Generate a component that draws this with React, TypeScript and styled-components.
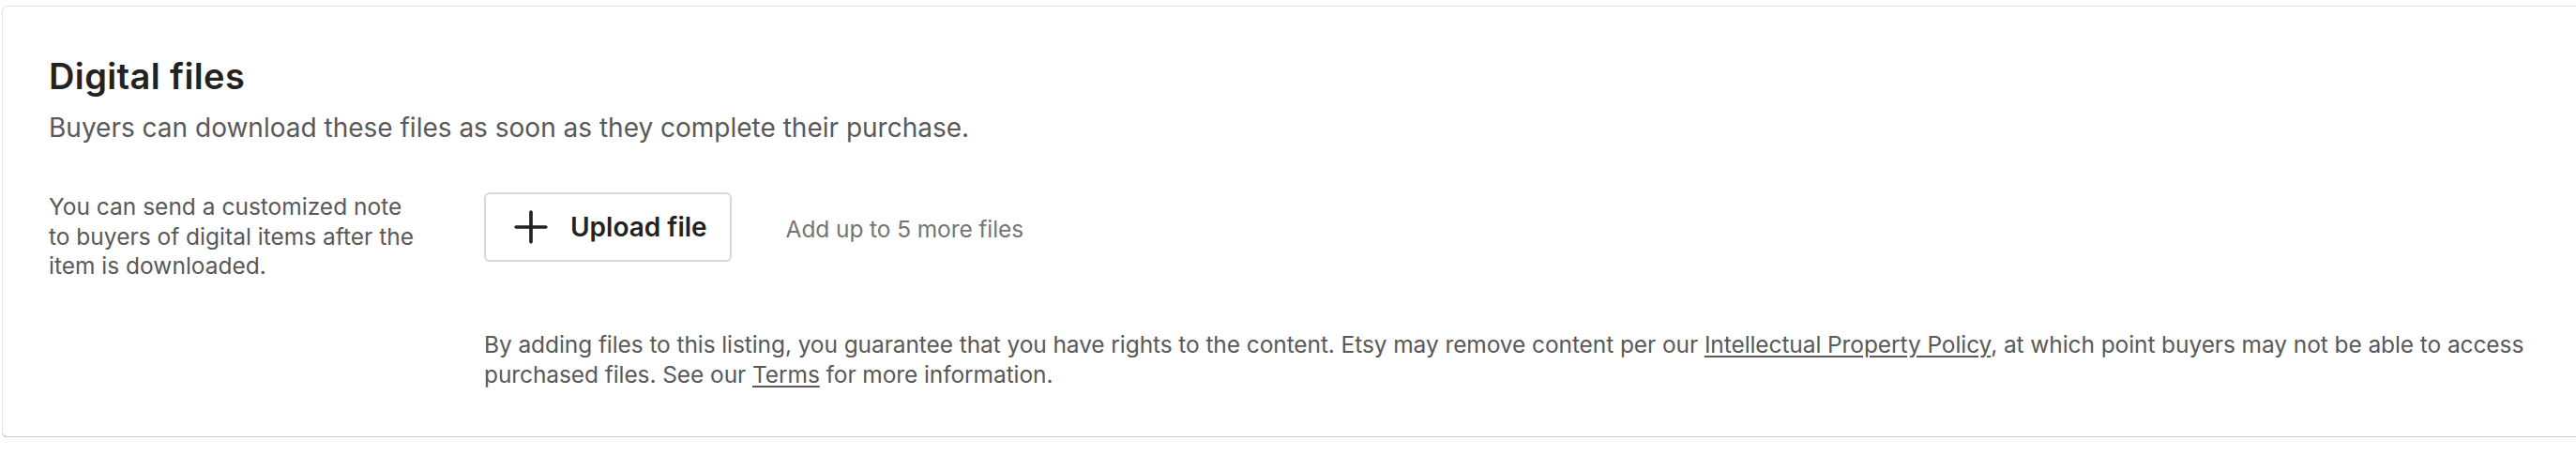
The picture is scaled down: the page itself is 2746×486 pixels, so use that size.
import React from "react";
import styled, { createGlobalStyle } from "styled-components";

const GlobalStyle = createGlobalStyle`
  html, body {
    margin: 0;
    padding: 0;
    background: #ffffff;
    overflow: hidden;
  }
  body {
    font-family: Inter, "Noto Sans", "Liberation Sans", sans-serif;
    color: #222222;
  }
`;

const CardUI = styled.section`
  margin: 6px -40px 0 2px;
  padding: 53px 52px 50px 49px;
  background: #ffffff;
  border: 1px solid #e4e4df;
  border-bottom-color: #cccccc;
  border-radius: 6px;
  box-shadow: 0 1px 0 #d2d2d2;
`;

const Title = styled.h2`
  margin: 0;
  font-size: 38px;
  line-height: 43px;
  font-weight: 600;
  color: #222222;
  letter-spacing: 0.01em;
`;

const Subtitle = styled.p`
  margin: 12px 0 0 0;
  font-size: 28px;
  line-height: 42px;
  font-weight: 400;
  color: #595959;
`;

const BodyRow = styled.div`
  display: grid;
  grid-template-columns: 464px 1fr;
  margin-top: 48px;
`;

const Note = styled.p`
  margin: 0;
  max-width: 395px;
  font-size: 24.5px;
  line-height: 31.5px;
  color: #595959;
`;

const RightCol = styled.div`
  display: flex;
  flex-direction: column;
`;

const UploadRow = styled.div`
  display: flex;
  align-items: center;
  gap: 58px;
`;

const UploadButton = styled.button`
  display: flex;
  align-items: center;
  gap: 22px;
  height: 74px;
  padding: 0 24px 0 28px;
  background: #ffffff;
  border: 2px solid #d9d9d9;
  border-radius: 6px;
  font-family: inherit;
  font-size: 28px;
  font-weight: 600;
  color: #222222;
  cursor: pointer;

  svg {
    width: 40px;
    height: 40px;
    flex: none;
  }
`;

const Hint = styled.span`
  font-size: 24.5px;
  line-height: 31.5px;
  letter-spacing: -0.1px;
  color: #757575;
  padding-top: 6px;
`;

const Disclaimer = styled.p`
  margin: 73px 0 0 0;
  font-size: 24.5px;
  line-height: 31.5px;
  letter-spacing: -0.09px;
  color: #595959;

  a {
    color: inherit;
    text-decoration: underline;
    text-underline-offset: 3px;
  }
`;

const PlusIcon = () => (
  <svg viewBox="0 0 24 24" fill="none" stroke="#222222" strokeWidth={2.2} strokeLinecap="round">
    <path d="M12 2.5v19M2.5 12h19" />
  </svg>
);

const App: React.FC = () => {
  return (
    <>
      <GlobalStyle />
      <CardUI>
        <Title>Digital files</Title>
        <Subtitle>Buyers can download these files as soon as they complete their purchase.</Subtitle>
        <BodyRow>
          <Note>
            You can send a customized note to buyers of digital items after the item is downloaded.
          </Note>
          <RightCol>
            <UploadRow>
              <UploadButton type="button">
                <PlusIcon />
                Upload file
              </UploadButton>
              <Hint>Add up to 5 more files</Hint>
            </UploadRow>
            <Disclaimer>
              By adding files to this listing, you guarantee that you have rights to the content. Etsy may remove
              content per our <a href="#">Intellectual Property Policy</a>, at which point buyers may not be able to
              access purchased files. See our <a href="#">Terms</a> for more information.
            </Disclaimer>
          </RightCol>
        </BodyRow>
      </CardUI>
    </>
  );
};

export default App;
